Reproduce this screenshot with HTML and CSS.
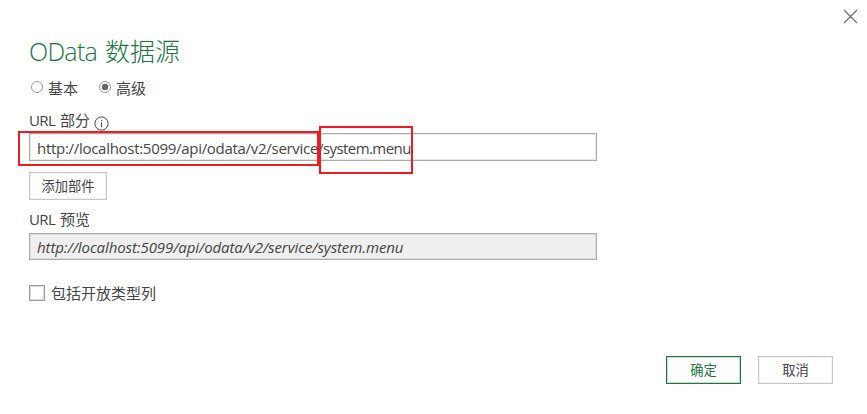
FILE: index.html
```html
<!DOCTYPE html>
<html lang="zh-CN">
<head>
<meta charset="utf-8">
<title>OData 数据源</title>
<link rel="stylesheet" href="styles.css">
</head>
<body>
<main class="dialog">
  <svg class="close" viewBox="0 0 15 15"><path d="M1 1l13 13M14 1L1 14"/></svg>
  <h1 class="title"><span class="title-latin">OData</span><span>数据源</span></h1>
  <div class="modes">
    <label class="mode"><i class="radio"></i><span>基本</span></label>
    <label class="mode"><i class="radio checked"></i><span>高级</span></label>
  </div>
  <div class="label"><span class="url">URL</span><span>部分</span>
    <svg class="info" viewBox="0 0 15 15"><circle cx="7.5" cy="7.5" r="6.6"/><path d="M7.5 6.3v5M7.5 3.8v1.3"/></svg>
  </div>
  <div class="field"><span class="address">http://localhost:5099/api/odata/v2/service<span class="path">/system.menu</span></span>
    <b class="mark mark-base"></b><b class="mark mark-path"></b>
  </div>
  <button class="button add">添加部件</button>
  <div class="label preview-label"><span class="url">URL</span><span>预览</span></div>
  <div class="field preview"><span class="address">http://localhost:5099/api/odata/v2/service/system.menu</span></div>
  <label class="option"><i class="checkbox"></i><span>包括开放类型列</span></label>
  <footer class="actions">
    <button class="button primary">确定</button>
    <button class="button">取消</button>
  </footer>
</main>
</body>
</html>
```
FILE: styles.css
```css
* { box-sizing: border-box; }
body {
  margin: 0;
  background: #fff;
  color: #444;
  font: 15px "Open Sans", "Noto Sans CJK SC", sans-serif;
}
.dialog {
  position: relative;
  display: flex;
  flex-direction: column;
  align-items: flex-start;
  width: 867px;
  height: 414px;
  padding: 34px 34px 0 29px;
  overflow: hidden;
}
.close {
  position: absolute;
  left: 843px;
  top: 9px;
  width: 15px;
  height: 15px;
  fill: none;
  stroke: #666;
  stroke-width: 1.1;
}
.title {
  display: flex;
  gap: 8px;
  height: 34px;
  margin: 0;
  color: #217346;
  font-size: 25px;
  font-weight: 300;
  line-height: 34px;
  white-space: nowrap;
}
.title-latin { width: 68px; letter-spacing: -0.7px; }
.modes { display: flex; gap: 21px; height: 20px; margin-top: 10px; padding-left: 2px; line-height: 20px; }
.mode { display: flex; gap: 5px; }
.radio {
  width: 12px;
  height: 12px;
  margin-top: 3px;
  border: 1px solid #999;
  border-radius: 50%;
}
.checked { background: radial-gradient(circle, #666 0 3px, #fff 3.6px); }
.label { display: flex; gap: 5px; height: 20px; margin-top: 12px; line-height: 20px; }
.url { width: 26px; letter-spacing: -0.6px; }
.info { width: 15px; height: 15px; margin: 6px 0 0 -1px; fill: none; stroke: #444; stroke-width: 1; }
.field {
  position: relative;
  width: 568px;
  height: 28px;
  margin-top: 3px;
  padding-left: 7px;
  border: 1px solid #ababab;
  box-shadow: inset 0 0 0 1px #e8e8e8;
  line-height: 29px;
  white-space: nowrap;
}
.address { letter-spacing: -0.29px; }
.path { letter-spacing: -0.58px; }
.mark { position: absolute; border: 2px solid #ed1c24; }
.mark-base { left: -12px; top: -3px; width: 301px; height: 35px; }
.mark-path { left: 289px; top: -8px; width: 94px; height: 48px; }
.button {
  width: 75px;
  height: 28px;
  padding: 0;
  border: 1px solid #c6c6c6;
  box-shadow: inset 0 0 0 1px #f3f3f3;
  background: #fff;
  color: #444;
  font: 13.3px/26px "Open Sans", "Noto Sans CJK SC", sans-serif;
}
.add { width: 78px; margin-top: 11px; }
.preview-label { margin-top: 9px; }
.preview { height: 27px; margin-top: 4px; background: #efefef; box-shadow: inset 0 0 0 1px #dcdcdc; font-style: italic; line-height: 27px; }
.preview .address { letter-spacing: -0.09px; }
.option { display: flex; gap: 6px; height: 20px; margin-top: 23px; line-height: 20px; }
.checkbox { width: 16px; height: 16px; margin-top: 2px; border: 1px solid #999; box-shadow: inset 0 0 0 1px #ddd; }
.actions { display: flex; gap: 17px; align-self: flex-end; margin-top: 53px; }
.primary { border-color: #217346; box-shadow: inset 0 0 0 1px #c5dccf; color: #217346; }
```
